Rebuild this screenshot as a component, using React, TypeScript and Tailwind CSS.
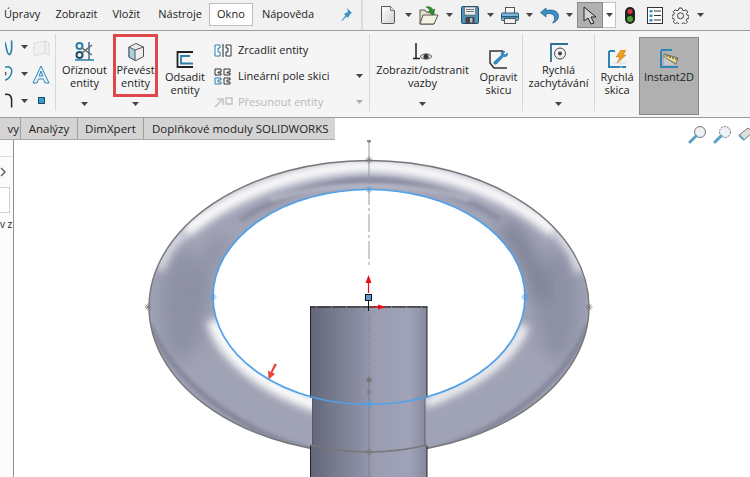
import React from "react";

const Caret = ({ className = "" }: { className?: string }) => (
  <svg width="7" height="4" viewBox="0 0 7 4" className={"shrink-0 " + className}>
    <path d="M0 0h7L3.5 4z" fill="#444" />
  </svg>
);

const NewDoc = () => (
  <svg width="16" height="18" viewBox="0 0 16 18" className="shrink-0">
    <defs>
      <linearGradient id="pg" x1="0" y1="0" x2="1" y2="1">
        <stop offset="0" stopColor="#fff" />
        <stop offset="1" stopColor="#d0d0d0" />
      </linearGradient>
    </defs>
    <path d="M1.5.5h9l4 4v12a1 1 0 0 1-1 1h-11a1 1 0 0 1-1-1z" fill="url(#pg)" stroke="#555" />
    <path d="M10.5.5v4h4" fill="#eee" stroke="#777" />
  </svg>
);
const OpenIcon = () => (
  <svg width="20" height="19" viewBox="0 0 20 19" className="shrink-0">
    <path d="M1 4h5l1 2h8v12H1z" fill="#e6e2cf" stroke="#555" />
    <path d="M1 18l3-9h15l-4 9z" fill="#f4f1e2" stroke="#555" />
    <path d="M7 1c3-1 6 0 7 3l2-1-2 6-5-3 2-1c-1-2-2-3-4-4z" fill="#2e8b2e" stroke="#1c641c" strokeWidth=".5" />
  </svg>
);
const SaveIcon = () => (
  <svg width="18" height="18" viewBox="0 0 18 18" className="shrink-0">
    <rect x=".5" y=".5" width="17" height="17" rx="1" fill="#4d93ba" stroke="#1f4e6b" />
    <rect x="3.5" y="1" width="11" height="8" fill="#eee" stroke="#555" strokeWidth=".6" />
    <path d="M5 3.5h8M5 5.500h8" stroke="#777" />
    <rect x="4.500" y="11" width="9" height="6.500" fill="#444" />
    <rect x="9" y="12" width="2.500" height="4.500" fill="#bbb" />
  </svg>
);
const PrintIcon = () => (
  <svg width="18" height="17" viewBox="0 0 18 17" className="shrink-0">
    <rect x="4.500" y=".5" width="9" height="6" fill="#f5f5f5" stroke="#555" />
    <rect x=".5" y="6" width="17" height="7.500" rx="1" fill="#7db6d6" stroke="#2a5a78" />
    <rect x="1" y="9" width="16" height="1.500" fill="#1f5f84" />
    <rect x="3.500" y="11.500" width="11" height="5" fill="#eee" stroke="#555" />
  </svg>
);
const UndoIcon = () => (
  <svg width="19" height="17" viewBox="0 0 19 17" className="shrink-0">
    <path
      d="M6 1L.5 5.500 6 10V7c5-1 9 0 8.500 5-.1 1.500-1 3-2 4 4-1 6-4 6-7 0-5-6-7-12.500-5.500z"
      fill="#3a8fc4"
      stroke="#1f5f84"
      strokeWidth=".7"
    />
  </svg>
);
const CursorIcon = () => (
  <svg width="15" height="19" viewBox="0 0 15 19" className="shrink-0">
    <path d="M1 1v14l4-3 3 6 3-1-3-6h5z" fill="#d4d4d4" stroke="#222" strokeWidth="1" />
  </svg>
);
const TrafficIcon = () => (
  <svg width="12" height="17" viewBox="0 0 12 17" className="shrink-0">
    <rect x="1" y="0" width="10" height="17" rx="5" fill="#222" />
    <circle cx="6" cy="4.500" r="2.500" fill="#d8343a" />
    <circle cx="6" cy="12" r="3" fill="#4aa832" />
  </svg>
);
const ListIcon = () => (
  <svg width="16" height="17" viewBox="0 0 16 17" className="shrink-0">
    <rect x=".5" y=".5" width="15" height="16" fill="#fff" stroke="#333" />
    <rect x="2.500" y="3" width="3" height="2.500" fill="#3a8fc4" />
    <rect x="2.500" y="7.500" width="3" height="2.500" fill="#3a8fc4" />
    <rect x="2.500" y="12" width="3" height="2.500" fill="#3a8fc4" />
    <path d="M7 4h7M7 8.500h7M7 13h7" stroke="#333" />
  </svg>
);
const GearIcon = () => (
  <svg width="17" height="17" viewBox="0 0 17 17" className="shrink-0">
    <path
      d="M7 1h3l.4 2 1.700.8L14 2.800l1.800 2.200-1.300 1.500.4 1.500 2 .5v2.800l-2 .5-.6 1.500 1.200 1.700-2 1.900-1.800-1.100-1.500.6-.5 1.500H7l-.4-1.600-1.600-.7-1.700 1.100-2-1.900 1.100-1.700-.6-1.500-1.900-.5V8.300l1.900-.5.600-1.600L1.200 4.700 3.200 2.800 5 3.800l1.600-.7z"
      fill="none"
      stroke="#444"
    />
    <circle cx="8.500" cy="8.800" r="3" fill="none" stroke="#444" />
  </svg>
);

const TrimIcon = () => (
  <svg width="20" height="20" viewBox="0 0 20 20">
    <circle cx="4.500" cy="4" r="3" fill="none" stroke="#2a7fa8" strokeWidth="2" />
    <circle cx="4.500" cy="13" r="3" fill="none" stroke="#1f4e6b" strokeWidth="2" />
    <path d="M7 6l10 7M7 11l10-8" stroke="#666" strokeWidth="1.500" />
    <path d="M0 18h19" stroke="#2a7fa8" strokeWidth="1.500" />
    <path d="M14 0v18" stroke="#3a6f8c" strokeWidth="1.500" />
  </svg>
);
const CubeIcon = () => (
  <svg width="18" height="18" viewBox="0 0 18 18">
    <path d="M2 4l7-3.500L16.500 4v9.500L9 17.500 2 14z" fill="#eee" stroke="#555" />
    <path d="M2 4l6 3v10.500L2 14z" fill="#a8d0e4" stroke="#555" />
    <path d="M8 7l8.500-3" stroke="#555" fill="none" />
  </svg>
);
const OffsetIcon = () => (
  <svg width="18" height="17" viewBox="0 0 18 17">
    <path d="M17 1H1.500v15H17" fill="none" stroke="#222" strokeWidth="1.800" />
    <path d="M14 5H5v7.500h12" fill="none" stroke="#2a7fa8" strokeWidth="1.800" />
  </svg>
);
const MirrorIcon = () => (
  <svg width="18" height="13" viewBox="0 0 18 13">
    <path d="M1 1h5v3H4v4h2v4H1z" fill="#fff" stroke="#2a7fa8" />
    <path d="M17 1h-5v3h2v4h-2v4h5z" fill="#fff" stroke="#333" />
    <path d="M9 0v13" stroke="#222" />
  </svg>
);
const PatternIcon = () => (
  <svg width="18" height="17" viewBox="0 0 18 17" fill="none">
    <path d="M1 1h6v3H4v1h3v2H1z" stroke="#333" />
    <path d="M10 1h6v3h-3v1h3v2h-6z" stroke="#333" />
    <path d="M1 10h6v2H4v2h3v2H1z" stroke="#2a7fa8" />
    <path d="M10 10h6v2h-3v2h3v2h-6z" stroke="#333" />
  </svg>
);
const MoveIcon = () => (
  <svg width="19" height="11" viewBox="0 0 19 11" fill="none">
    <path d="M1 10l7-7M3 2h6v6" stroke="#c4c4c4" strokeWidth="1.500" />
    <rect x="12" y="1" width="6" height="6" stroke="#c4c4c4" strokeWidth="1.500" />
  </svg>
);
const RelationIcon = () => (
  <svg width="20" height="19" viewBox="0 0 20 19" fill="none">
    <path d="M3 0v15M0 15.500h7" stroke="#222" strokeWidth="1.500" />
    <path d="M7 13.500c3-3.500 9-3.500 12 0-3 3.500-9 3.500-12 0z" fill="#ddd" stroke="#555" />
    <circle cx="13" cy="13.500" r="2.500" fill="#333" />
  </svg>
);
const RepairIcon = () => (
  <svg width="19" height="19" viewBox="0 0 19 19" fill="none">
    <path d="M14 1H1v12l4 5h13" stroke="#333" strokeWidth="1.500" />
    <path
      d="M15 1c-2 0-3.500 2-2.500 4L5 12c-1 1.500 1 3 2.500 2l7-7.500c2.500 1 4.500-1 4-3.500l-2.500 2-2-1.500L16 2z"
      fill="#2a8fc8"
      stroke="#1f5f84"
      strokeWidth=".5"
    />
  </svg>
);
const SnapIcon = () => (
  <svg width="18" height="19" viewBox="0 0 18 19" fill="none">
    <path d="M1 19V1h17" stroke="#2f6f92" strokeWidth="1.800" />
    <circle cx="10" cy="10.500" r="5.500" stroke="#444" />
    <circle cx="10" cy="10.500" r="2" fill="#444" />
  </svg>
);
const QuickIcon = () => (
  <svg width="19" height="19" viewBox="0 0 19 19" fill="none">
    <path d="M1 1v16h17" stroke="#2f86b5" strokeWidth="2" />
    <path d="M1 1h6" stroke="#2f86b5" strokeWidth="2" />
    <path d="M5 13h13M13 3v15" stroke="#ddd" />
    <path d="M13 0h5l-3 5h3L9 13l3-6H8z" fill="#f0a020" stroke="#b87408" strokeWidth=".5" />
  </svg>
);
const Instant2DIcon = () => (
  <svg width="19" height="21" viewBox="0 0 19 21" fill="none">
    <path d="M1 2v16h17" stroke="#2f86b5" strokeWidth="2" />
    <path d="M1 1h11" stroke="#2f86b5" strokeWidth="2" />
    <path d="M4 5l14 4-2 6L4 8z" fill="#e6d98a" stroke="#555" strokeWidth=".8" />
    <path d="M7 6v2M10 7v2M13 8v2M16 9v2" stroke="#333" />
    <path d="M4 8l11 8H4z" fill="#cfd3d8" opacity=".7" />
  </svg>
);

const Sep = () => <div className="w-px bg-[#d8d8d8] my-[3px] h-[77px] shrink-0" />;

function Btn({
  lines,
  icon,
  w,
  caret,
  low,
}: {
  lines: string[];
  icon: React.ReactNode;
  w: string;
  caret?: boolean;
  low?: boolean;
}) {
  return (
    <div className={"flex flex-col items-center shrink-0 h-full " + w + (low ? " pt-[18px]" : " pt-[11px]")}>
      <div className="h-[20px] flex items-center justify-center">{icon}</div>
      <div className="h-[1px]" />
      {lines.map((l) => (
        <div key={l} className="text-[11px] leading-[13px] whitespace-nowrap text-[#222]">
          {l}
        </div>
      ))}
      {caret && <Caret className="mt-auto mb-[11px]" />}
    </div>
  );
}

const Cross = ({ x, y, c = "#777" }: { x: number; y: number; c?: string }) => (
  <path
    d={`M${x - 3.5} ${y}h7M${x} ${y - 3.5}v7M${x - 2.5} ${y - 2.5}l5 5M${x + 2.5} ${y - 2.5}l-5 5`}
    stroke={c}
    strokeWidth=".8"
  />
);

function Model() {
  return (
    <svg viewBox="14 140 736 337" className="block w-full h-full">
      <defs>
        <clipPath id="ringc">
          <path
            clipRule="evenodd"
            d="M149 307a220 146.500 0 1 0 440 0a220 146.500 0 1 0-440 0zM213 297a156 107.500 0 1 0 312 0a156 107.500 0 1 0-312 0z"
          />
        </clipPath>
        <filter id="b2" x="-20%" y="-20%" width="140%" height="140%">
          <feGaussianBlur stdDeviation="2" />
        </filter>
        <filter id="b4" x="-20%" y="-20%" width="140%" height="140%">
          <feGaussianBlur stdDeviation="4" />
        </filter>
        <filter id="b8" x="-30%" y="-30%" width="160%" height="160%">
          <feGaussianBlur stdDeviation="8" />
        </filter>
        <linearGradient id="cyl" x1="310" x2="427" y1="0" y2="0" gradientUnits="userSpaceOnUse">
          <stop offset="0" stopColor="#63657a" />
          <stop offset=".12" stopColor="#6f7185" />
          <stop offset=".4" stopColor="#888b9f" />
          <stop offset=".55" stopColor="#9a9db2" />
          <stop offset=".85" stopColor="#a0a3b8" />
          <stop offset="1" stopColor="#85889c" />
        </linearGradient>
      </defs>
      <g clipPath="url(#ringc)">
        <rect x="140" y="150" width="460" height="320" fill="#a0a2b5" />
        <ellipse cx="183" cy="305" rx="22" ry="55" fill="#8e91a5" filter="url(#b8)" />
        <ellipse cx="557" cy="305" rx="22" ry="55" fill="#8e91a5" filter="url(#b8)" />
        <path d="M225 240Q195 270 198 305" stroke="#8a8da1" strokeWidth="12" fill="none" filter="url(#b8)" />
        <path d="M505 225Q538 265 542 300" stroke="#7f8296" strokeWidth="18" fill="none" filter="url(#b8)" />
        <path d="M185 232C235 190 305 167 369 166C435 167 505 190 555 232" stroke="#fff" strokeWidth="13" fill="none" filter="url(#b4)" />
        <path d="M185 232Q165 248 160 270" stroke="#e6e7ee" strokeWidth="8" fill="none" filter="url(#b4)" />
        <path d="M556 232Q575 248 580 272" stroke="#f0f1f5" strokeWidth="8" fill="none" filter="url(#b4)" />
        <path d="M240 220C280 195 330 180 369 180C410 180 465 195 500 220" stroke="#888b9f" strokeWidth="5" fill="none" filter="url(#b2)" />
        <path d="M270 200C310 188 340 186 369 186C400 186 440 190 470 200" stroke="#c4c6d2" strokeWidth="3" fill="none" filter="url(#b2)" />
        <path d="M214 320C222 355 265 388 320 406" stroke="#fff" strokeWidth="14" fill="none" filter="url(#b4)" />
        <path d="M524 325C515 352 485 380 425 403" stroke="#fff" strokeWidth="9" fill="none" filter="url(#b4)" />
        <path d="M150 325C180 395 260 440 320 452M588 325C560 395 480 440 425 452" stroke="#7a7d91" strokeWidth="4" fill="none" filter="url(#b2)" />
      </g>
      <ellipse cx="369" cy="307" rx="220" ry="146.500" fill="none" stroke="#777" strokeWidth="1.400" />

      <rect x="310" y="307" width="117" height="91" fill="url(#cyl)" />
      <rect x="312" y="396" width="113" height="52" fill="url(#cyl)" />
      <rect x="310" y="446" width="117" height="31" fill="url(#cyl)" />
      <path d="M310.500 307V398M427 307V398M310.500 446V477M427 446V477" stroke="#222" strokeWidth="1" />
      <path d="M312.500 398V446M425 398V446" stroke="#555" strokeWidth=".8" />
      <path d="M310 306.800H427.500" stroke="#111" strokeWidth="1.200" />
      <path d="M316 306.800H424" stroke="#fff" strokeWidth=".6" strokeDasharray="1 14" />
      <path d="M310 445Q369 459 427 445" fill="none" stroke="#777" strokeWidth="1.300" />

      <ellipse cx="369" cy="297" rx="156" ry="107.500" fill="none" stroke="#4ea1ea" strokeWidth="1.700" />

      <circle cx="369" cy="141" r="2" fill="#888" />
      <path d="M369 141V159" stroke="#999" />
      <path d="M369 160V268" stroke="#999" strokeDasharray="18 3 3 3" />
      <path d="M369 315V380" stroke="#8a8a90" strokeDasharray="18 3 3 3" />
      <path d="M369 380V477" stroke="#7e7e84" />
      <circle cx="369" cy="392" r="2" fill="#7e7e84" />
      <circle cx="369" cy="380" r="2" fill="#6a6a70" />
      <Cross x={369} y={160} />
      <Cross x={369} y={189.5} c="#4ea1ea" />
      <Cross x={213} y={297} c="#4ea1ea" />
      <Cross x={525} y={297} c="#4ea1ea" />
      <Cross x={148} y={307} />
      <Cross x={589} y={307} />
      <Cross x={369} y={404} c="#4ea1ea" />
      <Cross x={369} y={380} />
      <Cross x={369} y={452} />

      <path d="M368.500 301V311" stroke="#111" />
      <path d="M368.500 293V282" stroke="#e8101a" strokeWidth="1.200" />
      <path d="M368.500 275l3 8h-6z" fill="#e8101a" />
      <path d="M372 307h7" stroke="#e8101a" strokeWidth="1.200" />
      <path d="M386 307l-8-2.500v5z" fill="#e8101a" />
      <rect x="365.500" y="294.500" width="6" height="6" fill="#5b9bd9" stroke="#111" />
      <path d="M277 364.500l-4.500 8 2.500 1.500-6.500 5.500-.5-9 2.500 1.500 4-8.500z" fill="#e44a42" />
    </svg>
  );
}

export default function App() {
  return (
    <div className="w-[750px] h-[477px] overflow-hidden bg-white flex flex-col font-['Open_Sans','Noto_Sans',sans-serif] text-[#222]">
      {/* top bar */}
      <div className="h-[31px] shrink-0 flex bg-[#f1f1f1] border-b border-[#9a9a9a]">
        <div className="w-[363px] shrink-0 flex items-center text-[11px] border-r-2 border-[#dcdcdc] pb-px">
          <span className="ml-[4px]">Úpravy</span>
          <span className="ml-[15px]">Zobrazit</span>
          <span className="ml-[15px]">Vložit</span>
          <span className="ml-[18px]">Nástroje</span>
          <span className="ml-[7px] w-[44px] h-[23px] flex items-center justify-center bg-white border border-[#bdbdbd]">
            Okno
          </span>
          <span className="ml-[9px]">Nápověda</span>
          <svg width="13" height="13" viewBox="0 0 13 13" className="ml-[25px]">
            <path d="M8 0l5 5-2 1-2 4-1.500-1.500L3 13l-.5-.5 4-5L5 6l4-2z" fill="#3a8fc4" />
          </svg>
        </div>
        <div className="flex items-center flex-1 pl-[17px]">
          <NewDoc />
          <Caret className="ml-[9px]" />
          <span className="ml-[7px]">
            <OpenIcon />
          </span>
          <Caret className="ml-[7px]" />
          <span className="ml-[8px]">
            <SaveIcon />
          </span>
          <Caret className="ml-[8px]" />
          <span className="ml-[7px]">
            <PrintIcon />
          </span>
          <Caret className="ml-[7px]" />
          <span className="ml-[7px]">
            <UndoIcon />
          </span>
          <Caret className="ml-[7px]" />
          <div className="ml-[4px] h-[26px] flex">
            <div className="w-[26px] bg-[#b0b0b0] border border-[#888] flex items-center justify-center">
              <CursorIcon />
            </div>
            <div className="w-[13px] bg-white border border-l-0 border-[#c4c4c4] flex items-center justify-center">
              <Caret />
            </div>
          </div>
          <span className="ml-[8px]">
            <TrafficIcon />
          </span>
          <span className="ml-[11px]">
            <ListIcon />
          </span>
          <span className="ml-[9px]">
            <GearIcon />
          </span>
          <Caret className="ml-[8px]" />
        </div>
      </div>

      {/* ribbon */}
      <div className="h-[87px] shrink-0 flex bg-[#f5f5f5] border-b border-[#9a9a9a]">
        <div className="w-[55px] shrink-0 flex">
          <div className="w-[30px] shrink-0 flex flex-col justify-between pt-[6px] pb-[6px] pr-[7px] items-end">
            {[
              <svg key="a" width="23" height="20" viewBox="0 0 23 20" fill="none">
                <path d="M-2 0c4 0 3 17 7 17s3-13 3-17" stroke="#2a7fa8" strokeWidth="2" transform="translate(0 2)" />
              </svg>,
              <svg key="b" width="23" height="20" viewBox="0 0 23 20" fill="none">
                <path d="M0 2c5-2 9 1 8 6s-5 9-10 10" stroke="#2a7fa8" strokeWidth="1.800" />
                <rect x="-2" y="8" width="3" height="3" fill="#fff" stroke="#222" />
              </svg>,
              <svg key="c" width="23" height="20" viewBox="0 0 23 20" fill="none">
                <path d="M-2 3c6-3 10 0 10 6v9" stroke="#222" strokeWidth="1.800" />
              </svg>,
            ].map((s, i) => (
              <div key={i} className="flex items-center w-full justify-between h-[20px] -mr-[5px]">
                {s}
                <Caret className="ml-[-3px]" />
              </div>
            ))}
          </div>
          <div className="flex-1 flex flex-col items-center pt-[9px] pr-[3px]">
            <svg width="17" height="18" viewBox="0 0 17 18" fill="none">
              <path d="M1 3l11-2v12l-11 3zM12 1l4 2v12l-4-2" stroke="#d0d0d0" strokeDasharray="2 1" fill="#f0f0f0" />
            </svg>
            <svg width="18" height="19" viewBox="0 0 18 19" fill="none" className="mt-[7px]">
              <path d="M9 1L1 18h4l1.500-4h5l1.500 4h4zM9 6l-1.800 5h3.600z" stroke="#2f86b5" fill="#e8f2f8" />
            </svg>
            <div className="mt-[13px] w-[7px] h-[7px] bg-[#3a9ac8] border border-[#1f4e6b]" />
          </div>
        </div>
        <Sep />
        <Btn w="w-[57px]" lines={["Oříznout", "entity"]} icon={<TrimIcon />} caret />
        <div className="w-[45px] shrink-0 h-full flex flex-col items-center pt-[3px]">
          <div className="w-[45px] h-[63px] border-[3px] border-[#e0474c] flex flex-col items-center pt-[5px]">
            <div className="h-[20px] flex items-center">
              <CubeIcon />
            </div>
            <div className="h-[1px]" />
            <div className="text-[11px] leading-[13px] whitespace-nowrap">Převést</div>
            <div className="text-[11px] leading-[13px] whitespace-nowrap">entity</div>
          </div>
          <Caret className="mt-auto mb-[11px]" />
        </div>
        <Btn w="w-[54px]" lines={["Odsadit", "entity"]} icon={<OffsetIcon />} low />
        <div className="w-[157px] shrink-0 flex flex-col pl-[2px] pr-[6px] pt-[6px] text-[11px]">
          <div className="h-[26px] flex items-center gap-[6px]">
            <MirrorIcon />
            <span>Zrcadlit entity</span>
          </div>
          <div className="h-[26px] flex items-center gap-[6px]">
            <PatternIcon />
            <span>Lineární pole skici</span>
            <Caret className="ml-auto" />
          </div>
          <div className="h-[26px] flex items-center gap-[5px] text-[#b9b9b9]">
            <MoveIcon />
            <span>Přesunout entity</span>
            <Caret className="ml-auto opacity-40" />
          </div>
        </div>
        <Sep />
        <Btn w="w-[105px]" lines={["Zobrazit/odstranit", "vazby"]} icon={<RelationIcon />} caret />
        <Btn w="w-[47px]" lines={["Opravit", "skicu"]} icon={<RepairIcon />} low />
        <Sep />
        <Btn w="w-[71px]" lines={["Rychlá", "zachytávání"]} icon={<SnapIcon />} caret />
        <Sep />
        <Btn w="w-[44px]" lines={["Rychlá", "skica"]} icon={<QuickIcon />} low />
        <div className="w-[60px] shrink-0 h-[78px] mt-[6px] bg-[#b0b0b0] border border-[#8a8a8a] flex flex-col items-center pt-[11px]">
          <div className="h-[20px] flex items-center">
            <Instant2DIcon />
          </div>
          <div className="h-px" />
          <div className="text-[11px] leading-[13px]">Instant2D</div>
        </div>
      </div>

      {/* tabs row */}
      <div className="h-[22px] shrink-0 flex justify-between bg-white">
        <div className="w-[335px] flex bg-[#d4d4d4] border-b border-[#a8a8a8] text-[11.5px] items-center">
          <div className="w-[21px] h-full flex items-center justify-end pr-[1px] border-r border-[#a0a0a0] overflow-hidden">
            <span>vy</span>
          </div>
          <div className="w-[57px] h-full flex items-center justify-center border-r border-[#a0a0a0]">Analýzy</div>
          <div className="w-[66px] h-full flex items-center justify-center border-r border-[#a0a0a0]">DimXpert</div>
          <div className="flex-1 h-full flex items-center pl-[8px] whitespace-nowrap">Doplňkové moduly SOLIDWORKS</div>
        </div>
        <div className="flex items-start pt-[7px] gap-[6px] w-[62px] overflow-hidden h-[27px] relative z-10">
          {[0, 1].map((i) => (
            <svg key={i} width="19" height="19" viewBox="0 0 19 19" fill="none" className="shrink-0">
              <circle cx="12" cy="7" r="5.500" fill="#eef2f4" stroke="#777" strokeDasharray={i ? "2 1" : undefined} />
              <path d="M8 11l-6 6" stroke="#5b9fc4" strokeWidth="3" strokeLinecap="round" />
            </svg>
          ))}
          <svg width="19" height="19" viewBox="0 0 19 19" fill="none" className="shrink-0">
            <path d="M1 10l9-7 5 4-9 8z" fill="#ddd" stroke="#777" />
            <path d="M1 10l5 5" stroke="#5b9fc4" strokeWidth="2" />
          </svg>
        </div>
      </div>

      {/* main */}
      <div className="flex-1 min-h-0 flex -mt-[5px]">
        <div className="w-[14px] shrink-0 mt-[5px] bg-[#fbfbfb] border-r border-[#8f8f8f] flex flex-col text-[10px]">
          <div className="h-[17px] shrink-0 border-b border-[#dcdcdc]" />
          <div className="h-[30px] shrink-0 flex items-center">
            <svg width="7" height="10" viewBox="0 0 7 10" fill="none">
              <path d="M1 1l4 4-4 4" stroke="#666" strokeWidth="1.500" />
            </svg>
          </div>
          <div className="h-[26px] shrink-0 w-[10px] border border-l-0 border-[#d0d0d0] bg-white" />
          <div className="mt-[5px] whitespace-nowrap overflow-hidden leading-[12px]">v z</div>
        </div>
        <div className="flex-1 min-w-0 mt-[5px]">
          <Model />
        </div>
      </div>
    </div>
  );
}
